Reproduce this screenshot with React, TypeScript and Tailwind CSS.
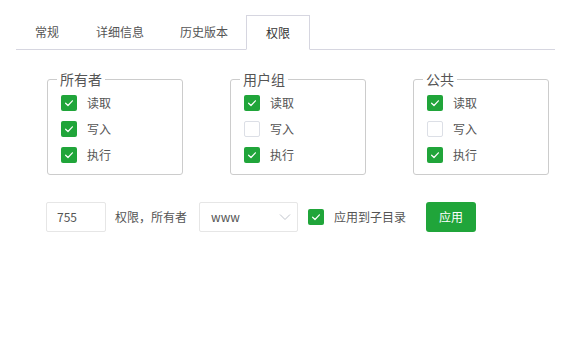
const font = { fontFamily: '"Noto Sans CJK SC", "Noto Sans", sans-serif' };

function Check({ checked }: { checked: boolean }) {
  if (!checked) {
    return <span className="block w-4 h-4 rounded-[2px] border border-[#dcdfe6] bg-white" />;
  }
  return (
    <span className="flex items-center justify-center w-4 h-4 rounded-[2px] bg-[#20a53a]">
      <svg width="16" height="16" viewBox="0 0 16 16" fill="none">
        <path d="M4.6 8.2 L7 10.5 L11.4 5.8" stroke="#fff" strokeWidth="1.2" strokeLinecap="round" strokeLinejoin="round" />
      </svg>
    </span>
  );
}

const tabs = [
  { label: "常规", w: "w-[62px]" },
  { label: "详细信息", w: "w-[84px]" },
  { label: "历史版本", w: "w-[84px]" },
  { label: "权限", w: "w-[64px]", active: true },
];

const groups = [
  { title: "所有者", perms: [true, true, true] },
  { title: "用户组", perms: [true, false, true] },
  { title: "公共", perms: [true, false, true] },
];

const permNames = ["读取", "写入", "执行"];

export default function App() {
  return (
    <div className="w-[571px] h-[349px] bg-white text-[#555]" style={font}>
      {/* Tabs */}
      <div className="mt-[15px] mx-[16px] flex h-[35px] border-b border-[#d6d6e0]">
        {tabs.map((t) =>
          t.active ? (
            <div
              key={t.label}
              className={`${t.w} h-[35px] flex items-center justify-center text-[12px] text-[#333] bg-white border border-[#d6d6e0] border-b-white`}
            >
              {t.label}
            </div>
          ) : (
            <div key={t.label} className={`${t.w} h-[34px] flex items-center justify-center text-[12px]`}>
              {t.label}
            </div>
          )
        )}
      </div>

      {/* Permission groups */}
      <div className="mt-[19px] ml-[47px] flex gap-[47px]">
        {groups.map((g) => (
          <fieldset key={g.title} className="w-[136px] border border-[#cccccc] rounded-[3px] pl-[13px] pb-[6px]">
            <legend className="-ml-[4px] px-[3px] text-[14px] leading-[20px] text-[#555]">{g.title}</legend>
            <div className="pt-px flex flex-col">
              {g.perms.map((p, i) => (
                <div key={i} className="h-[26px] flex items-center gap-[10px]">
                  <Check checked={p} />
                  <span className="text-[12px] text-[#555]">{permNames[i]}</span>
                </div>
              ))}
            </div>
          </fieldset>
        ))}
      </div>

      {/* Bottom row */}
      <div className="mt-[27px] ml-[46px] flex items-center h-[30px]">
        <div className="w-[60px] h-[30px] border border-[#e6e6e6] rounded-[2px] flex items-center pl-[10px] text-[12px] text-[#555]">
          755
        </div>
        <span className="ml-[9px] text-[12px] text-[#555]">权限，所有者</span>
        <div className="ml-[12px] w-[99px] h-[30px] border border-[#e6e6e6] rounded-[2px] flex items-center justify-between pl-[11px] pr-[6px] text-[12px] text-[#555]">
          <span>www</span>
          <svg width="12" height="8" viewBox="0 0 12 8" fill="none">
            <path d="M1 1.5 L6 6.5 L11 1.5" stroke="#c0c4cc" strokeWidth="1" />
          </svg>
        </div>
        <div className="ml-[10px]">
          <Check checked />
        </div>
        <span className="ml-[10px] text-[12px] text-[#555]">应用到子目录</span>
        <button className="ml-[20px] w-[50px] h-[30px] rounded-[3px] bg-[#20a53a] text-white text-[12px]">应用</button>
      </div>
    </div>
  );
}
